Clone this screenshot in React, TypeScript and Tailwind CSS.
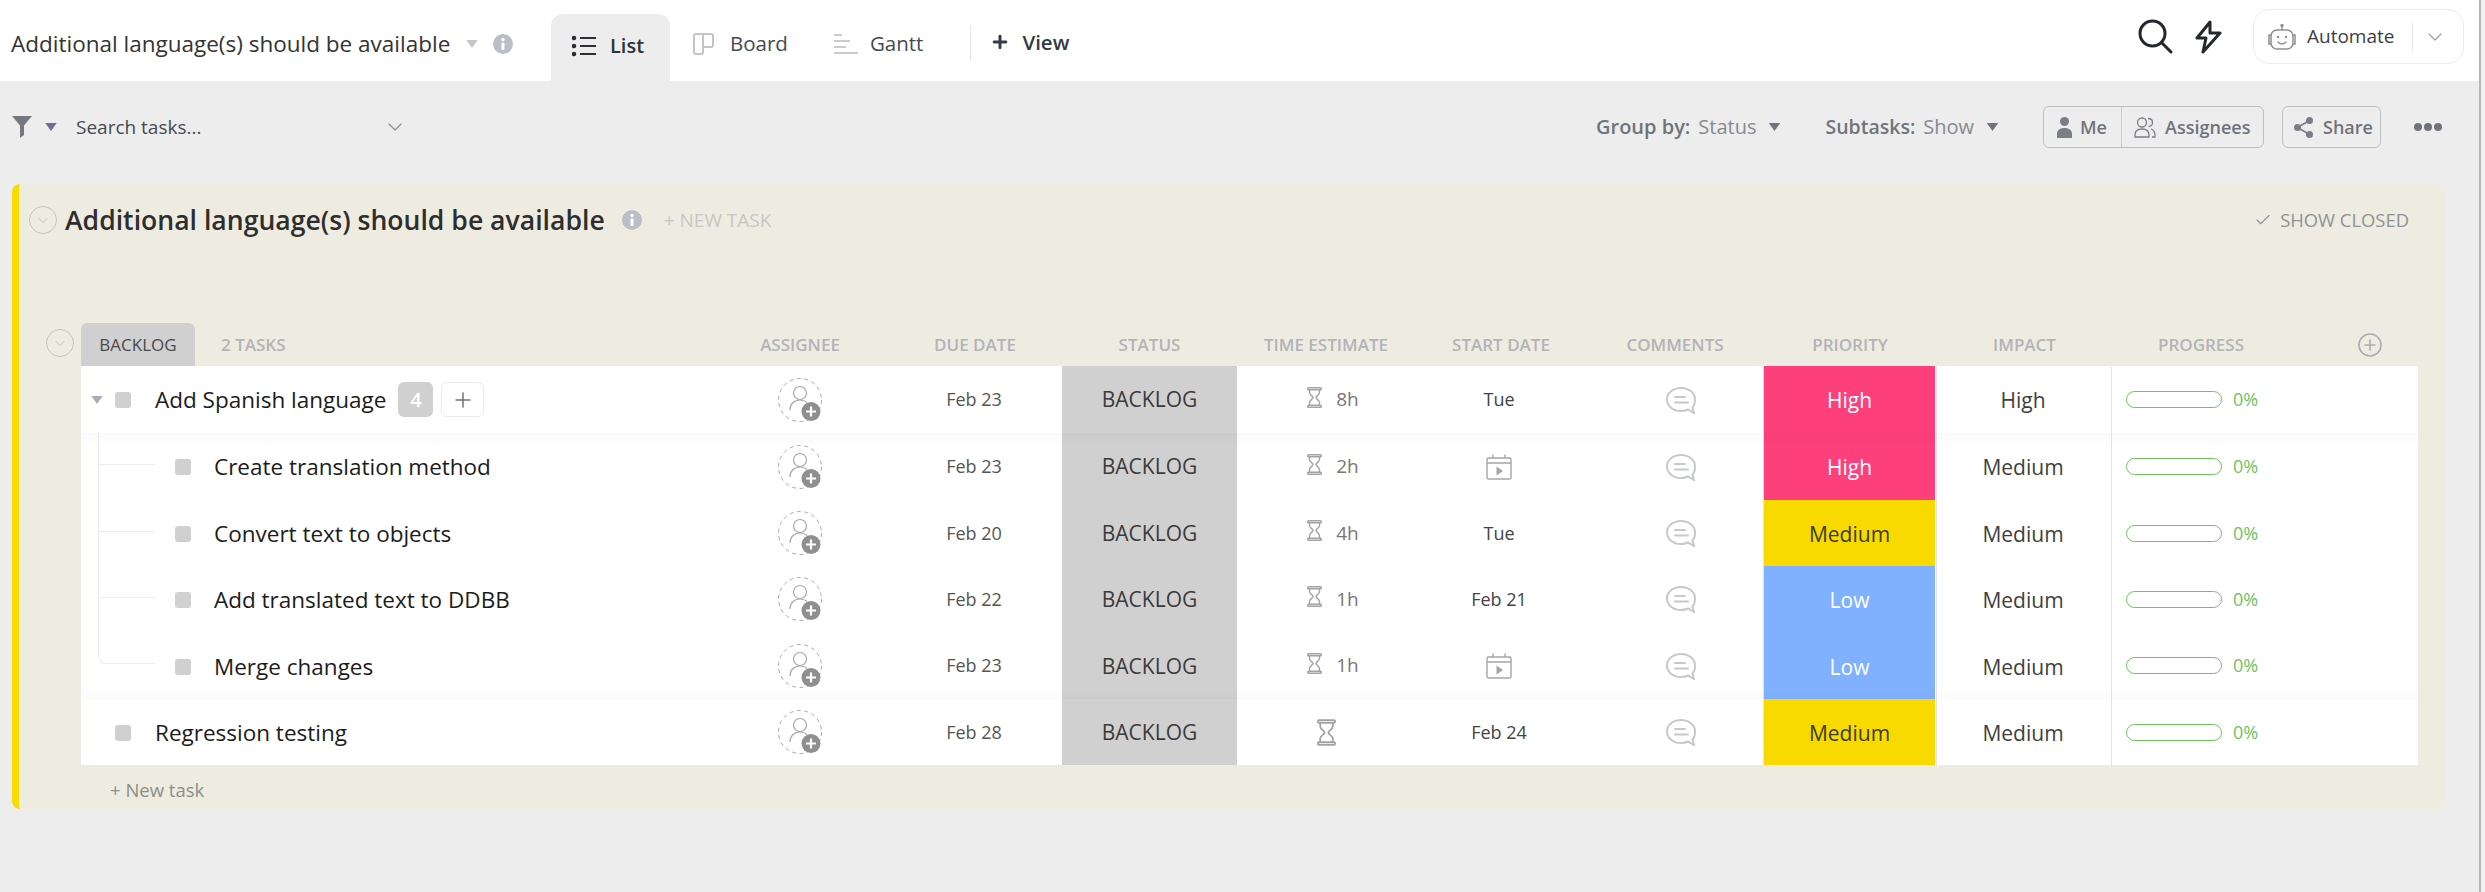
import { Check, ChevronDown, Plus } from "lucide-react";

const font = "font-['Open_Sans',sans-serif]";

type Task = {
  name: string;
  sub?: boolean;
  due: string;
  time: string;
  start?: string;
  priority: "High" | "Medium" | "Low";
  impact: string;
  count?: number;
};

const tasks: Task[] = [
  { name: "Add Spanish language", due: "Feb 23", time: "8h", start: "Tue", priority: "High", impact: "High", count: 4 },
  { name: "Create translation method", sub: true, due: "Feb 23", time: "2h", priority: "High", impact: "Medium" },
  { name: "Convert text to objects", sub: true, due: "Feb 20", time: "4h", start: "Tue", priority: "Medium", impact: "Medium" },
  { name: "Add translated text to DDBB", sub: true, due: "Feb 22", time: "1h", start: "Feb 21", priority: "Low", impact: "Medium" },
  { name: "Merge changes", sub: true, due: "Feb 23", time: "1h", priority: "Low", impact: "Medium" },
  { name: "Regression testing", due: "Feb 28", time: "", start: "Feb 24", priority: "Medium", impact: "Medium" },
];

const priorityClass = {
  High: "bg-[#fd3f7c] text-white",
  Medium: "bg-[#f9da00] text-[#3c3c1e]",
  Low: "bg-[#80b1ff] text-white",
};

const Caret = ({ className }: { className: string }) => (
  <svg viewBox="0 0 10 7" className={className}>
    <path d="M0 0h10L5 7z" fill="currentColor" />
  </svg>
);

const InfoIcon = () => (
  <svg viewBox="0 0 20 20" className="w-5 h-5 shrink-0">
    <circle cx="10" cy="10" r="10" fill="#b9bec7" />
    <rect x="8.5" y="8.5" width="3" height="7.5" rx="1" fill="#fff" />
    <circle cx="10" cy="5.5" r="1.7" fill="#fff" />
  </svg>
);

const CollapseCircle = () => (
  <svg viewBox="0 0 28 28" className="w-7 h-7 shrink-0" fill="none" stroke="#c4c5b8">
    <circle cx="14" cy="14" r="13.5" />
    <path d="M9.5 12l4.5 4.5 4.5-4.5" />
  </svg>
);

const Hourglass = ({ big }: { big?: boolean }) => (
  <svg viewBox="0 0 15 21" className={big ? "w-[19px] h-[27px]" : "w-[15px] h-[21px] mb-[5px]"} fill="none" stroke="#a3a3a3">
    <rect x="0.75" y="0.75" width="13.5" height="2" rx="0.8" strokeWidth="1.5" />
    <rect x="0.75" y="18.25" width="13.5" height="2" rx="0.8" strokeWidth="1.5" />
    <path d="M2.5 3v2.5c0 2.5 3.5 3.5 3.5 5s-3.5 2.5-3.5 5V18M12.5 3v2.5c0 2.5-3.5 3.5-3.5 5s3.5 2.5 3.5 5V18" strokeWidth="1.4" />
  </svg>
);

const CalendarPlay = () => (
  <svg viewBox="0 0 26 26" className="w-[26px] h-[26px]" fill="none" stroke="#a5a5a5" strokeWidth="1.4">
    <rect x="1" y="4" width="24" height="21" rx="1.5" />
    <path d="M1 9h24M7 0.5V4M19 0.5V4" />
    <path d="M10.5 12.5l6.5 4.5-6.5 4.5z" fill="#a5a5a5" stroke="none" />
  </svg>
);

const CommentIcon = () => (
  <svg viewBox="0 0 32 28" className="w-8 h-7" fill="none" stroke="#c6c8cb" strokeWidth="2" strokeLinecap="round">
    <path d="M16 2C8 2 2 7 2 13.5S8 25 16 25c2.500 0 5-.5 7-1.500l6 3.500-1.500-5.500C29.500 19.500 30 16.500 30 13.500 30 7 24 2 16 2z" />
    <path d="M10 11h10M10 16.500h13" />
  </svg>
);

const Avatar = () => (
  <svg viewBox="0 0 45 46" className="w-[45px] h-[46px]" fill="none">
    <circle cx="22" cy="23" r="21.500" stroke="#a8a8a8" strokeWidth="1" strokeDasharray="4 3.500" />
    <circle cx="22" cy="16" r="6.500" stroke="#a8a8a8" strokeWidth="1.200" />
    <path d="M12 33c0-6 4-10 10-10 3 0 5 .7 7 2.500" stroke="#a8a8a8" strokeWidth="1.200" />
    <circle cx="33" cy="34.500" r="9.500" fill="#8f8f8f" />
    <path d="M33 29.500v10M28 34.500h10" stroke="#fff" strokeWidth="2.200" />
  </svg>
);

const Header = () => (
  <div className="h-[81px] bg-white flex items-center shrink-0">
    <span className="ml-[11px] mt-[6px] text-[22.5px] font-medium text-[#343434] w-[455px] whitespace-nowrap">
      Additional language(s) should be available
    </span>
    <Caret className="mt-[6px] w-3 h-2 text-[#c4c6ca] shrink-0" />
    <span className="ml-[15px] mt-[6px]">
      <InfoIcon />
    </span>
    <div className="ml-[38px] self-end h-[67px] w-[119px] bg-[#ededed] rounded-t-xl flex items-center pl-[21px] pb-[3px] gap-[14px] text-[20px] font-semibold text-[#2f333b]">
      <svg viewBox="0 0 24 22" className="w-6 h-[22px]" fill="none" stroke="#2b2f36" strokeWidth="2.200">
        <path d="M8 3h16M8 11h16M8 19h16" />
        <circle cx="2" cy="3" r="1.200" />
        <circle cx="2" cy="11" r="1.200" />
        <circle cx="2" cy="19" r="1.200" />
      </svg>
      List
    </div>
    <div className="ml-[23px] mt-[6px] flex items-center gap-4 text-[20.5px] text-[#444a52]">
      <svg viewBox="0 0 21 22" className="w-[21px] h-[22px]" fill="none" stroke="#c2c4c8" strokeWidth="2">
        <path d="M10 1H3a2 2 0 00-2 2v16a2 2 0 002 2h5a2 2 0 002-2v-5h8a2 2 0 002-2V3a2 2 0 00-2-2h-8v13" />
      </svg>
      Board
    </div>
    <div className="ml-[46px] mt-[6px] flex items-center gap-3 text-[20.5px] text-[#444a52]">
      <svg viewBox="0 0 24 22" className="w-6 h-[22px]" fill="none" stroke="#c9cbce" strokeWidth="2">
        <path d="M0 2h8M0 8h16M0 14h12M0 20h24" />
      </svg>
      Gantt
    </div>
    <div className="ml-[47px] mt-[4px] h-[35px] w-px bg-[#e4e4e4]" />
    <div className="ml-[19px] mt-[3px] flex items-center gap-3 text-[20.5px] font-semibold text-[#343a42]">
      <Plus className="w-5 h-5" strokeWidth={3.500} />
      View
    </div>
    <div className="ml-auto mb-[8px] flex items-center">
      <svg viewBox="0 0 35 35" className="w-[35px] h-[35px]" fill="none" stroke="#24282e" strokeWidth="3" strokeLinecap="round">
        <circle cx="14.500" cy="14.500" r="12.500" />
        <path d="M24 24l9 9" />
      </svg>
      <svg viewBox="0 0 27 34" className="ml-[22px] w-[27px] h-[34px]" fill="none" stroke="#24282e" strokeWidth="3" strokeLinejoin="round">
        <path d="M15 2L2 18h9l-3 14 17-19h-10z" />
      </svg>
      <div className="ml-[31px] mr-[15px] w-[211px] h-[55px] rounded-2xl border border-[#ececec] flex items-center pl-[13px]">
        <svg viewBox="0 0 30 26" className="w-[30px] h-[28px]" fill="none" stroke="#8d9096" strokeWidth="1.500">
          <rect x="4" y="6" width="22" height="19" rx="6" />
          <path d="M15 6V2M4 11H2v9h2M26 11h2v9h-2" />
          <circle cx="15" cy="1.500" r="1" fill="#8d9096" />
          <circle cx="11" cy="13" r="1.200" fill="#8d9096" stroke="none" />
          <circle cx="19" cy="13" r="1.200" fill="#8d9096" stroke="none" />
          <path d="M11 18c2 2.500 6 2.500 8 0" strokeLinecap="round" />
        </svg>
        <span className="ml-[10px] w-[105px] text-[19px] text-[#3a3f46]">Automate</span>
        <span className="h-[28px] w-px bg-[#e5e5e5]" />
        <ChevronDown className="ml-[10px] w-[24px] h-[24px] text-[#9a9da3]" strokeWidth={1.200} />
      </div>
    </div>
  </div>
);

const Toolbar = () => (
  <div className="h-[103px] flex items-center shrink-0 pb-[11px] text-[#6f747c]">
    <svg viewBox="0 0 20 22" className="ml-[12px] w-5 h-[22px]">
      <path d="M0 0h20L12 9.500V19l-4 3V9.500z" fill="#747880" />
    </svg>
    <Caret className="ml-[13px] w-3 h-2 text-[#6e6f94]" />
    <span className="ml-[19px] w-[307px] text-[19px] text-[#444a52]">Search tasks...</span>
    <ChevronDown className="w-6 h-6 text-[#8a8d92]" strokeWidth={1.200} />
    <div className="ml-[1189px] flex items-center text-[20px] whitespace-nowrap">
      <span className="font-semibold">Group by:</span>
      <span className="ml-2 text-[#868a91]">Status</span>
      <Caret className="ml-3 w-[13px] h-2 text-[#6f747c]" />
      <span className="ml-[44px] text-[19.5px] font-semibold">Subtasks:</span>
      <span className="ml-2 text-[#868a91]">Show</span>
      <Caret className="ml-3 w-[13px] h-2 text-[#6f747c]" />
    </div>
    <div className="ml-[44px] h-[42px] w-[221px] flex border border-[#bcbec2] rounded-md text-[18px] font-semibold">
      <div className="w-[78px] flex items-center pl-[13px] gap-2 border-r border-[#c8cacd]">
        <svg viewBox="0 0 15 21" className="w-[15px] h-[21px]" fill="#7a7e86">
          <circle cx="7.500" cy="4.500" r="4.500" />
          <path d="M0 21v-4c0-4 3-6 7.500-6S15 13 15 17v4z" />
        </svg>
        Me
      </div>
      <div className="flex items-center pl-3 gap-[9px]">
        <svg viewBox="0 0 22 21" className="w-[22px] h-[21px]" fill="none" stroke="#7a7e86" strokeWidth="1.300">
          <circle cx="8" cy="5.500" r="4.500" />
          <path d="M1 20v-2c0-4 3-6 7-6s7 2 7 6v2z" />
          <path d="M14 1.500c3 0 4.500 2 4.500 4s-1.500 4-4 4M17 12c3 1 4 3 4 6v2h-3" />
        </svg>
        Assignees
      </div>
    </div>
    <div className="ml-[18px] h-[42px] w-[99px] flex items-center pl-[11px] gap-[10px] border border-[#bcbec2] rounded-md text-[18px] font-semibold">
      <svg viewBox="0 0 19 21" className="w-[19px] h-[21px]" fill="#7a7e86">
        <circle cx="15.500" cy="3.500" r="3.500" />
        <circle cx="3.500" cy="10.500" r="3.500" />
        <circle cx="15.500" cy="17.500" r="3.500" />
        <path d="M3.500 10.500l12-7M3.500 10.500l12 7" stroke="#7a7e86" strokeWidth="1.600" />
      </svg>
      Share
    </div>
    <div className="ml-[33px] flex gap-[2px]">
      <span className="w-2 h-2 rounded-full bg-[#6f747c]" />
      <span className="w-2 h-2 rounded-full bg-[#6f747c]" />
      <span className="w-2 h-2 rounded-full bg-[#6f747c]" />
    </div>
  </div>
);

const ColumnHeaders = () => (
  <div className="flex items-end h-[43px] mt-[67px] ml-[27px] text-[17px] font-semibold text-[#b1b4b8] whitespace-nowrap">
    <div className="w-[35px] self-center -mt-[3px]">
      <CollapseCircle />
    </div>
    <div className="h-[43px] w-[114px] bg-[#d0d0d0] rounded-t-md flex items-center justify-center text-[#4a4a4a] font-normal">
      BACKLOG
    </div>
    <div className="h-[43px] w-[531px] pl-[26px] flex items-center">2 TASKS</div>
    <div className="h-[43px] w-[148px] flex items-center justify-center">ASSIGNEE</div>
    <div className="h-[43px] w-[188px] pl-[14px] flex items-center justify-center">DUE DATE</div>
    <div className="h-[43px] w-[175px] flex items-center justify-center">STATUS</div>
    <div className="h-[43px] w-[178px] flex items-center justify-center">TIME ESTIMATE</div>
    <div className="h-[43px] w-[170px] pl-[2px] flex items-center justify-center">START DATE</div>
    <div className="h-[43px] w-[178px] pl-[2px] flex items-center justify-center">COMMENTS</div>
    <div className="h-[43px] w-[174px] flex items-center justify-center">PRIORITY</div>
    <div className="h-[43px] w-[175px] flex items-center justify-center">IMPACT</div>
    <div className="h-[43px] w-[178px] flex items-center justify-center">PROGRESS</div>
    <div className="h-[43px] flex items-center pl-[68px]">
      <svg viewBox="0 0 24 24" className="w-6 h-6" fill="none" stroke="#a9acb0" strokeWidth="1.600">
        <circle cx="12" cy="12" r="11" />
        <path d="M12 6.500v11M6.500 12h11" />
      </svg>
    </div>
  </div>
);

const Row = ({ task, index }: { task: Task; index: number }) => {
  const tall = index === 2 || index === 3 || index === 5 ? "h-[66px]" : "h-[67px]";
  // lower rows sit a pixel further down inside their cell
  const nudge = index >= 2 ? "pt-[2px]" : "";
  return (
    <div className={`flex relative bg-white text-[#3a3a3a] ${tall}`}>
      {/* name */}
      <div className={`w-[645px] flex items-center relative ${nudge}`}>
        {task.count !== undefined && <Caret className="absolute left-[10px] w-3 h-2 text-[#a9afb8]" />}
        {task.sub && <div className="ml-[94px] w-[16px] h-[16px] rounded-[3px] bg-[#d0d0d0]" />}
        {!task.sub && <div className="ml-[34px] w-[16px] h-[16px] rounded-[3px] bg-[#d0d0d0]" />}
        <span className={`text-[22.5px] text-[#1c1c1c] whitespace-nowrap ${task.sub ? "ml-[23px]" : "ml-[24px]"}`}>
          {task.name}
        </span>
        {task.count !== undefined && (
          <>
            <span className="ml-[12px] w-[35px] h-[35px] rounded-md bg-[#d0d0d0] text-white font-semibold text-[20px] flex items-center justify-center">
              {task.count}
            </span>
            <span className="ml-2 w-[43px] h-[35px] rounded-md border border-[#eaeaea] flex items-center justify-center">
              <Plus className="w-6 h-6 text-[#6f747c]" strokeWidth={1.500} />
            </span>
          </>
        )}
        {task.sub && (
          <div
            className={`absolute left-[17px] top-0 w-[57px] h-[32px] border-l border-b border-[#ececec] ${
              index === 4 ? "rounded-bl-lg" : ""
            }`}
          />
        )}
        {task.sub && index !== 4 && <div className="absolute left-[17px] top-[32px] bottom-0 border-l border-[#ececec]" />}
      </div>
      <div className="w-[148px] flex items-center justify-center">
        <Avatar />
      </div>
      <div className="w-[188px] pl-[12px] flex items-center justify-center text-[18px] text-[#555]">{task.due}</div>
      <div className={`w-[175px] bg-[#d0d0d0] flex items-center justify-center text-[21px] text-[#3b3b3b] ${nudge}`}>
        BACKLOG
      </div>
      <div className={`w-[178px] flex items-center justify-center gap-[14px] text-[19px] text-[#777] ${task.time ? "pl-[14px]" : ""}`}>
        <Hourglass big={!task.time} />
        {task.time && <span>{task.time}</span>}
      </div>
      <div className="w-[170px] flex items-center justify-center text-[18px] text-[#444] pr-[2px]">
        {task.start ?? <CalendarPlay />}
      </div>
      <div className="w-[178px] flex items-center justify-center pl-[14px]">
        <CommentIcon />
      </div>
      <div className="w-[174px] flex border-x border-[#e4e4e4]">
        <div className={`w-[171px] flex items-center justify-center text-[21px] ${index >= 2 ? "pt-[4px]" : "pt-[2px]"} ${priorityClass[task.priority]}`}>
          {task.priority}
        </div>
      </div>
      <div className={`w-[175px] flex items-center justify-center text-[21px] text-[#3f3f3f] border-r border-[#e4e4e4] pr-[2px] ${index >= 2 ? "pt-[4px]" : "pt-[2px]"}`}>
        {task.impact}
      </div>
      <div className="flex-1 flex items-center pl-[14px]">
        <div className="w-[96px] h-[17px] rounded-full border border-[#6cc35e]" />
        <span className="ml-[11px] text-[18px] text-[#6cc35e]">0%</span>
      </div>
      {/* shadows between top level tasks */}
      {index === 1 && (
        <div className="absolute inset-x-0 top-0 h-[16px] bg-gradient-to-b from-black/[0.02] to-transparent" />
      )}
      {index === 4 && (
        <div className="absolute inset-x-0 bottom-0 h-[12px] bg-gradient-to-t from-black/[0.02] to-transparent" />
      )}
    </div>
  );
};

const App = () => {
  return (
    <div className={`w-[2485px] h-[892px] overflow-hidden flex bg-[#ededed] ${font}`}>
      <div className="w-[2479px] flex flex-col">
        <Header />
        <Toolbar />
        <div className="w-[2433px] h-[625px] ml-[12px] bg-[#eeece0] border-l-[7px] border-[#fadb00] rounded-lg flex flex-col">
          <div className="flex items-center h-[72px] ml-[10px] pr-[36px]">
            <CollapseCircle />
            <span className="ml-[8px] pt-[2px] text-[26.6px] font-semibold text-[#2e2e2e] whitespace-nowrap">
              Additional language(s) should be available
            </span>
            <span className="ml-[17px]">
              <InfoIcon />
            </span>
            <span className="ml-[22px] text-[19px] text-[#c6c7c2]">+ NEW TASK</span>
            <span className="ml-auto flex items-center gap-2 text-[18.4px] text-[#8f9396]">
              <Check className="w-[18px] h-[18px]" strokeWidth={1.500} />
              SHOW CLOSED
            </span>
          </div>
          <ColumnHeaders />
          <div className="ml-[62px] w-[2337px] flex flex-col">
            {tasks.map((task, i) => (
              <Row key={task.name} task={task} index={i} />
            ))}
          </div>
          <div className="ml-[91px] mt-[11px] text-[18.5px] text-[#8c8e8a]">+ New task</div>
        </div>
      </div>
      <div className="w-[6px] h-full border-l-2 border-[#b5b5b5] bg-[#f1f1f1]" />
    </div>
  );
};

export default App;
